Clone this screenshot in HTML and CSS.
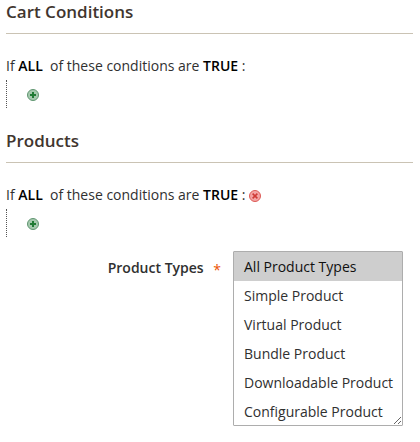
FILE: index.html
```html
<!DOCTYPE html>
<html lang="en">
<head>
<meta charset="utf-8">
<title>Conditions</title>
<link rel="stylesheet" href="styles.css">
</head>
<body>
<section class="section">
  <h2 class="section-title">Cart Conditions</h2>
  <p class="rule">If <b class="val">ALL</b>&nbsp; of these conditions are <b class="val">TRUE</b> :</p>
  <div class="children">
    <svg class="icon" viewBox="0 0 12 12" width="12" height="12" aria-hidden="true"><circle cx="6" cy="6" r="5.5" fill="#a5c9ae" stroke="#5f9570"/><path d="M6 3v6M3 6h6" stroke="#1f7a34" stroke-width="2"/></svg>
  </div>
</section>
<section class="section section-products">
  <h2 class="section-title">Products</h2>
  <p class="rule">If <b class="val">ALL</b>&nbsp; of these conditions are <b class="val">TRUE</b> :
    <svg class="icon icon-del" viewBox="0 0 12 12" width="12" height="12" aria-hidden="true"><circle cx="6" cy="6" r="5.5" fill="#f3a5a5" stroke="#dc5a56"/><path d="M3.6 3.6l4.8 4.8M8.4 3.6l-4.8 4.8" stroke="#cf3a36" stroke-width="1.5"/></svg>
  </p>
  <div class="children">
    <svg class="icon" viewBox="0 0 12 12" width="12" height="12" aria-hidden="true"><circle cx="6" cy="6" r="5.5" fill="#a5c9ae" stroke="#5f9570"/><path d="M6 3v6M3 6h6" stroke="#1f7a34" stroke-width="2"/></svg>
  </div>
</section>
<div class="field">
  <label class="field-label" for="types">Product Types <span class="req">*</span></label>
  <select class="multi" id="types" multiple size="6">
    <option selected>All Product Types</option>
    <option>Simple Product</option>
    <option>Virtual Product</option>
    <option>Bundle Product</option>
    <option>Downloadable Product</option>
    <option>Configurable Product</option>
  </select>
</div>
</body>
</html>
```

FILE: styles.css
```css
html, body {
  margin: 0;
  padding: 0;
  background: #fff;
}
body {
  width: 420px;
  height: 442px;
  overflow: hidden;
  font-family: "Open Sans", sans-serif;
  font-size: 14px;
  line-height: 20px;
  color: #303030;
}
.section {
  padding: 0 7px 0 6px;
}
.section-products {
  margin-top: 21px;
}
.section-title {
  margin: 0;
  height: 33px;
  border-bottom: 1px solid #cac3b4;
  font-size: 17px;
  font-weight: 600;
  line-height: 24px;
  color: #41362f;
}
.rule {
  margin: 22px 0 0;
  height: 20px;
  white-space: nowrap;
}
.val {
  font-weight: 600;
  color: #000;
}
.children {
  margin-top: 4px;
  height: 28px;
  box-sizing: border-box;
  border-left: 1px dotted #555;
  padding: 9px 0 0 20px;
  display: flex;
  align-items: flex-start;
}
.icon {
  display: block;
  flex: none;
}
.icon-del {
  display: inline-block;
  vertical-align: -2px;
}
.field {
  margin-top: 14px;
  display: flex;
  align-items: flex-start;
}
.field-label {
  width: 221px;
  box-sizing: border-box;
  padding: 7px 0 0 0;
  text-align: right;
  font-weight: 600;
  white-space: pre;
}
.req {
  color: #eb5202;
  margin-left: 6px;
  font-weight: 400;
  vertical-align: -2px;
  line-height: 0;
}
.multi {
  margin: 0 0 0 12px;
  width: 170px;
  height: 175px;
  box-sizing: border-box;
  border: 1px solid #adadad;
  border-radius: 1px;
  padding: 0;
  background: #fff;
  font-family: "Open Sans", sans-serif;
  font-size: 14px;
  color: #303030;
  resize: both;
  overflow: hidden;
  outline: none;
}
.multi option {
  height: 29px;
  box-sizing: border-box;
  padding: 5px 10px 4px;
  line-height: 20px;
}
```
